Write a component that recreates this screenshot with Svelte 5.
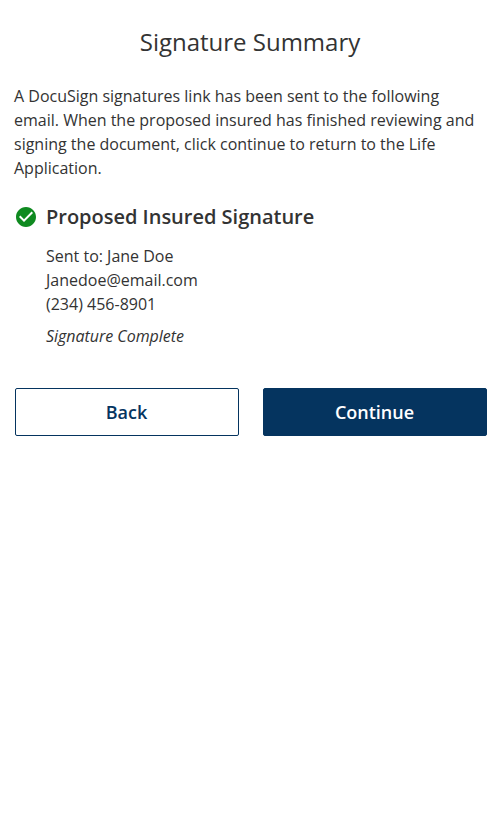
<script>
  const contact = ['Sent to: Jane Doe', 'Janedoe@email.com', '(234) 456-8901'];
</script>

<main>
  <h1>Signature Summary</h1>
  <p class="intro">A DocuSign signatures link has been sent to the following email. When the proposed insured has finished reviewing and signing the document, click continue to return to the Life Application.</p>
  <section>
    <header>
      <svg viewBox="2 2 20 20" width="20" height="20" aria-hidden="true">
        <path fill="#0f8a20" d="M12 2C6.48 2 2 6.48 2 12s4.48 10 10 10 10-4.48 10-10S17.52 2 12 2zm-2 15l-5-5 1.41-1.41L10 14.17l7.59-7.59L19 8l-9 9z" />
      </svg>
      <h2>Proposed Insured Signature</h2>
    </header>
    <div class="details">
      {#each contact as line}
        <div>{line}</div>
      {/each}
      <em>Signature Complete</em>
    </div>
  </section>
  <div class="actions">
    <button class="back">Back</button>
    <button class="continue">Continue</button>
  </div>
</main>

<style>
  :global(body) { margin: 0; background: #fff; }
  main {
    box-sizing: border-box;
    min-height: 820px;
    padding: 26px 13px 0 14px;
    font: 16px/24px 'Open Sans', sans-serif;
    color: #333;
  }
  h1 { margin: 0 1px 0 0; font-size: 24px; line-height: 32px; font-weight: 400; text-align: center; letter-spacing: -0.01px; }
  .intro { margin: 26px 0 0; }
  section { margin-top: 24px; }
  header { display: flex; align-items: center; gap: 10px; padding-left: 2px; }
  header svg { flex: none; }
  h2 { margin: 0; font-size: 20px; line-height: 26px; font-weight: 600; letter-spacing: -0.01px; }
  .details { margin: 14px 0 0 32px; }
  em { display: block; margin-top: 8px; letter-spacing: -0.03px; }
  .actions { display: flex; gap: 24px; margin: 40px 0 0 1px; }
  button {
    flex: 1;
    box-sizing: border-box;
    height: 48px;
    padding: 0 1px 0 0;
    border: 1px solid #05345f;
    border-radius: 2px;
    font: 600 18px/24px 'Open Sans', sans-serif;
  }
  .back { background: #fff; color: #05345f; }
  .continue { background: #05345f; color: #fff; }
</style>
